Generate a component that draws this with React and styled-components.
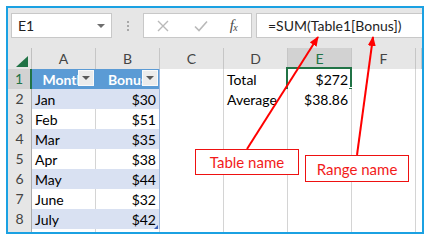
import React from "react";
import styled, { createGlobalStyle } from "styled-components";

const Global = createGlobalStyle`
  html, body { margin: 0; padding: 0; background: #fff; }
  body { font-family: "Lato", "Liberation Sans", sans-serif; }
`;

const Frame = styled.div`
  position: relative;
  margin: 6px 0 0 6px;
  width: 418px;
  height: 228px;
  box-sizing: border-box;
  border: 2px solid #1ba1e2;
  background: #fff;
  overflow: hidden;
`;

const Toolbar = styled.div`
  display: flex;
  align-items: flex-start;
  height: 40px;
  box-sizing: border-box;
  padding: 5px 0 0 3px;
  background: #e6e6e6;
`;

const BoxBase = styled.div`
  height: 25px;
  box-sizing: border-box;
  background: #fff;
  border: 1px solid #c8c8c8;
  display: flex;
  align-items: center;
`;

const NameBox = styled(BoxBase)`
  width: 101px;
  justify-content: space-between;
  padding: 0 6px 0 6px;
  font-size: 14px;
  color: #222;
`;

const Caret = styled.span`
  width: 0;
  height: 0;
  border-left: 4px solid transparent;
  border-right: 4px solid transparent;
  border-top: 4px solid #6e6e6e;
`;

const Sep = styled.div`
  width: 31px;
  height: 25px;
  display: flex;
  flex-direction: column;
  align-items: center;
  justify-content: center;
  gap: 2px;
`;

const Dot = styled.span`
  width: 2px;
  height: 2px;
  background: #a8a8a8;
`;

const FnBox = styled(BoxBase)`
  width: 109px;
  display: grid;
  grid-template-columns: 38px 38px 1fr;
  justify-items: center;
`;

const Fx = styled.span`
  font-family: "Liberation Serif", serif;
  font-style: italic;
  font-size: 15px;
  color: #4a4a4a;
  letter-spacing: -0.5px;
  margin-right: 4px;
  & sub { font-size: 10px; vertical-align: -1px; }
`;

const FormulaBox = styled(BoxBase)`
  flex: 1;
  margin-left: 4px;
  padding-left: 11px;
  border-right: none;
  font-size: 14px;
  color: #1e1e1e;
`;

const Row = styled.div`
  display: grid;
  grid-template-columns: 24px repeat(6, 64px) 1fr;
  height: ${p => p.$h || 20}px;
`;

const Corner = styled.div`
  box-sizing: border-box;
  background: #e6e6e6;
  border-right: 1px solid #c0c0c0;
  border-bottom: 1px solid #ababab;
  display: flex;
  align-items: flex-end;
  justify-content: flex-end;
  padding: 0 3px 3px 0;
`;

const ColHead = styled.div`
  box-sizing: border-box;
  background: ${p => (p.$sel ? "#d2d2d2" : "#e6e6e6")};
  color: ${p => (p.$sel ? "#217346" : "#444")};
  border-right: 1px solid #c6c6c6;
  border-bottom: 1px solid #ababab;
  font-size: 14px;
  text-align: center;
  line-height: 22px;
`;

const RowHead = styled.div`
  box-sizing: border-box;
  background: ${p => (p.$sel ? "#d2d2d2" : "#e6e6e6")};
  color: ${p => (p.$sel ? "#217346" : "#444")};
  border-right: ${p => (p.$sel ? "2px solid #217346" : "1px solid #ababab")};
  border-bottom: 1px solid #c6c6c6;
  font-size: 14px;
  text-align: center;
  line-height: 20px;
`;

const Cell = styled.div`
  position: relative;
  box-sizing: border-box;
  background: ${p => p.$bg || "#fff"};
  border-right: 1px solid ${p => p.$vr || "#d4d4d4"};
  border-bottom: 1px solid ${p => p.$hr || "#d4d4d4"};
  color: ${p => p.$color || "#000"};
  font-weight: ${p => (p.$bold ? 700 : 400)};
  text-align: ${p => p.$align || "left"};
  font-size: 14px;
  line-height: 21px;
  padding: 0 3px;
  white-space: nowrap;
  overflow: ${p => (p.$clip ? "hidden" : "visible")};
`;

const FilterBtn = styled.span`
  position: absolute;
  top: 1px;
  right: 1px;
  width: 16px;
  height: 16px;
  box-sizing: border-box;
  background: #ececec;
  border: 1px solid #fafafa;
  display: flex;
  align-items: center;
  justify-content: center;
  &::after {
    content: "";
    border-left: 4px solid transparent;
    border-right: 4px solid transparent;
    border-top: 4px solid #5a5a5a;
  }
`;

const Selection = styled.span`
  position: absolute;
  left: -2px;
  top: -2px;
  right: -1px;
  bottom: -1px;
  border: 2px solid #217346;
  pointer-events: none;
`;

const FillHandle = styled.span`
  position: absolute;
  right: -3px;
  bottom: -3px;
  width: 5px;
  height: 5px;
  background: #217346;
  border-left: 1px solid #fff;
  border-top: 1px solid #fff;
`;

const ResizeHandle = styled.span`
  position: absolute;
  right: 1px;
  bottom: 1px;
  width: 0;
  height: 0;
  border-left: 4px solid transparent;
  border-bottom: 4px solid #3a5fb8;
`;

const Overlay = styled.svg`
  position: absolute;
  left: 0;
  top: 0;
  width: 100%;
  height: 100%;
  pointer-events: none;
`;

const Note = styled.div`
  position: absolute;
  left: ${p => p.$x}px;
  top: ${p => p.$y}px;
  width: ${p => p.$w}px;
  height: ${p => p.$h}px;
  box-sizing: border-box;
  border: 1.5px solid #e11;
  background: #fff;
  color: #f21b1b;
  font-size: 15px;
  display: flex;
  align-items: center;
  justify-content: center;
`;

const BAND = "#d9e1f2";
const TBL_LINE = "#9bb7e0";
const HDR = "#5b9bd5";

const data = [
  { a: "Month", b: "Bonus", d: "Total", e: "$272", hdr: true },
  { a: "Jan", b: "$30", d: "Average", e: "$38.86" },
  { a: "Feb", b: "$51" },
  { a: "Mar", b: "$35" },
  { a: "Apr", b: "$38" },
  { a: "May", b: "$44" },
  { a: "June", b: "$32" },
  { a: "July", b: "$42", last: true },
];

function TableRow({ r, i }) {
  const n = i + 1;
  const band = n % 2 === 0;
  let aProps, bProps;
  if (r.hdr) {
    aProps = { $bg: HDR, $vr: HDR, $hr: TBL_LINE, $color: "#fff", $bold: true, $align: "center", $clip: true };
    bProps = { $bg: HDR, $vr: TBL_LINE, $hr: TBL_LINE, $color: "#fff", $bold: true, $align: "center", $clip: true };
  } else {
    aProps = { $bg: band ? BAND : "#fff", $vr: band ? BAND : "#d4d4d4", $hr: TBL_LINE };
    bProps = { $bg: band ? BAND : "#fff", $vr: TBL_LINE, $hr: TBL_LINE, $align: "right" };
  }
  return (
    <Row>
      <RowHead $sel={n === 1}>{n}</RowHead>
      <Cell {...aProps}>
        {r.a}
        {r.hdr && <FilterBtn />}
      </Cell>
      <Cell {...bProps}>
        {r.b}
        {r.hdr && <FilterBtn />}
        {r.last && <ResizeHandle />}
      </Cell>
      <Cell />
      <Cell>{r.d}</Cell>
      <Cell $align="right">
        {r.e}
        {n === 1 && (
          <>
            <Selection />
            <FillHandle />
          </>
        )}
      </Cell>
      <Cell />
      <Cell />
    </Row>
  );
}

export default function App() {
  return (
    <>
      <Global />
      <Frame>
        <Toolbar>
          <NameBox>
            <span>E1</span>
            <Caret />
          </NameBox>
          <Sep>
            <Dot />
            <Dot />
            <Dot />
          </Sep>
          <FnBox>
            <svg width="12" height="12" viewBox="0 0 12 12">
              <path d="M1 1 L11 11 M11 1 L1 11" stroke="#b9b9b9" strokeWidth="1.4" fill="none" />
            </svg>
            <svg width="14" height="12" viewBox="0 0 14 12">
              <path d="M1 6.5 L5 10.5 L13 1.5" stroke="#b9b9b9" strokeWidth="1.6" fill="none" />
            </svg>
            <Fx>
              f<sub>x</sub>
            </Fx>
          </FnBox>
          <FormulaBox>=SUM(Table1[Bonus])</FormulaBox>
        </Toolbar>
        <Row $h={21}>
          <Corner>
            <svg width="12" height="11" viewBox="0 0 12 11">
              <path d="M12 0 L12 11 L0 11 Z" fill="#217346" />
            </svg>
          </Corner>
          <ColHead>A</ColHead>
          <ColHead>B</ColHead>
          <ColHead>C</ColHead>
          <ColHead>D</ColHead>
          <ColHead $sel>E</ColHead>
          <ColHead>F</ColHead>
          <ColHead />
        </Row>
        {data.map((r, i) => (
          <TableRow key={i} r={r} i={i} />
        ))}
        <Row>
          <RowHead />
          <Cell />
          <Cell />
          <Cell />
          <Cell />
          <Cell />
          <Cell />
          <Cell />
        </Row>
        <Overlay>
          <defs>
            <marker id="ah" markerUnits="userSpaceOnUse" markerWidth="10" markerHeight="8" refX="9" refY="4" orient="auto">
              <path d="M0 0 L10 4 L0 8 Z" fill="#f00" />
            </marker>
          </defs>
          <line x1="239" y1="141" x2="310" y2="29" stroke="#f00" strokeWidth="2" markerEnd="url(#ah)" />
          <line x1="349" y1="147" x2="365" y2="29" stroke="#f00" strokeWidth="2" markerEnd="url(#ah)" />
        </Overlay>
        <Note $x={187} $y={141} $w={104} $h={26}>Table name</Note>
        <Note $x={297} $y={147} $w={104} $h={27}>Range name</Note>
      </Frame>
    </>
  );
}
